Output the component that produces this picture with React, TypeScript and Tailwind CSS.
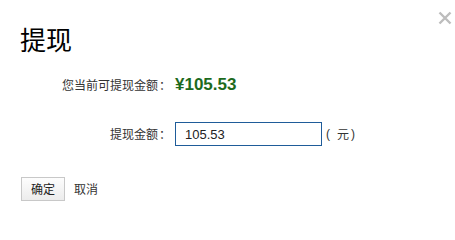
import React from "react";

const cjk = "font-['Noto_Sans_CJK_SC',sans-serif]";

const Colon = () => <span className="inline-block w-[12px] pl-[1px] text-left">：</span>;

const App = () => {
  return (
    <div className={`relative w-[455px] h-[202px] bg-white text-[#333] ${cjk}`}>
      {/* close */}
      <button className="absolute right-[3px] top-[11px] w-[14px] h-[14px] text-[#bdbdbd]">
        <svg viewBox="0 0 14 14" width="14" height="14">
          <path d="M1.5 1.5 L12.5 12.5 M12.5 1.5 L1.5 12.5" stroke="currentColor" strokeWidth="2.4" />
        </svg>
      </button>

      <div className="pl-[20px] pt-[20px]">
        <h2 className="text-[26px] leading-[38px] text-black font-normal">提现</h2>

        <div className="mt-[17px] flex items-center h-[20px]">
          <div className="w-[150px] text-right text-[12px] text-[#333] whitespace-nowrap">
            您当前可提现金额<Colon />
          </div>
          <div className="ml-[5px] font-['Liberation_Sans',sans-serif] font-bold text-[17px] text-[#1d6a1d]">¥105.53</div>
        </div>

        <div className="mt-[27px] flex items-center h-[24px]">
          <div className="w-[150px] text-right text-[12px] text-[#333] whitespace-nowrap">
            提现金额<Colon />
          </div>
          <input
            defaultValue="105.53"
            className="ml-[5px] w-[147px] h-[24px] border border-[#1f5c99] px-[9px] text-[13px] text-[#222] font-['Liberation_Sans',sans-serif] outline-none"
          />
          <span className="ml-[4px] flex items-center text-[12px] text-[#333]">
            <span className="font-['Liberation_Sans',sans-serif]">(</span>
            <span className="ml-[7px] mr-[2px]">元</span>
            <span className="font-['Liberation_Sans',sans-serif]">)</span>
          </span>
        </div>

        <div className="mt-[31px] flex items-center gap-[9px]">
          <button className="ml-[1px] w-[44px] h-[24px] border border-[#c8c8c8] bg-gradient-to-b from-[#fdfdfd] to-[#ececec] text-[12px] text-[#222]">
            确定
          </button>
          <span className="text-[12px] text-[#333]">取消</span>
        </div>
      </div>
    </div>
  );
};

export default App;
